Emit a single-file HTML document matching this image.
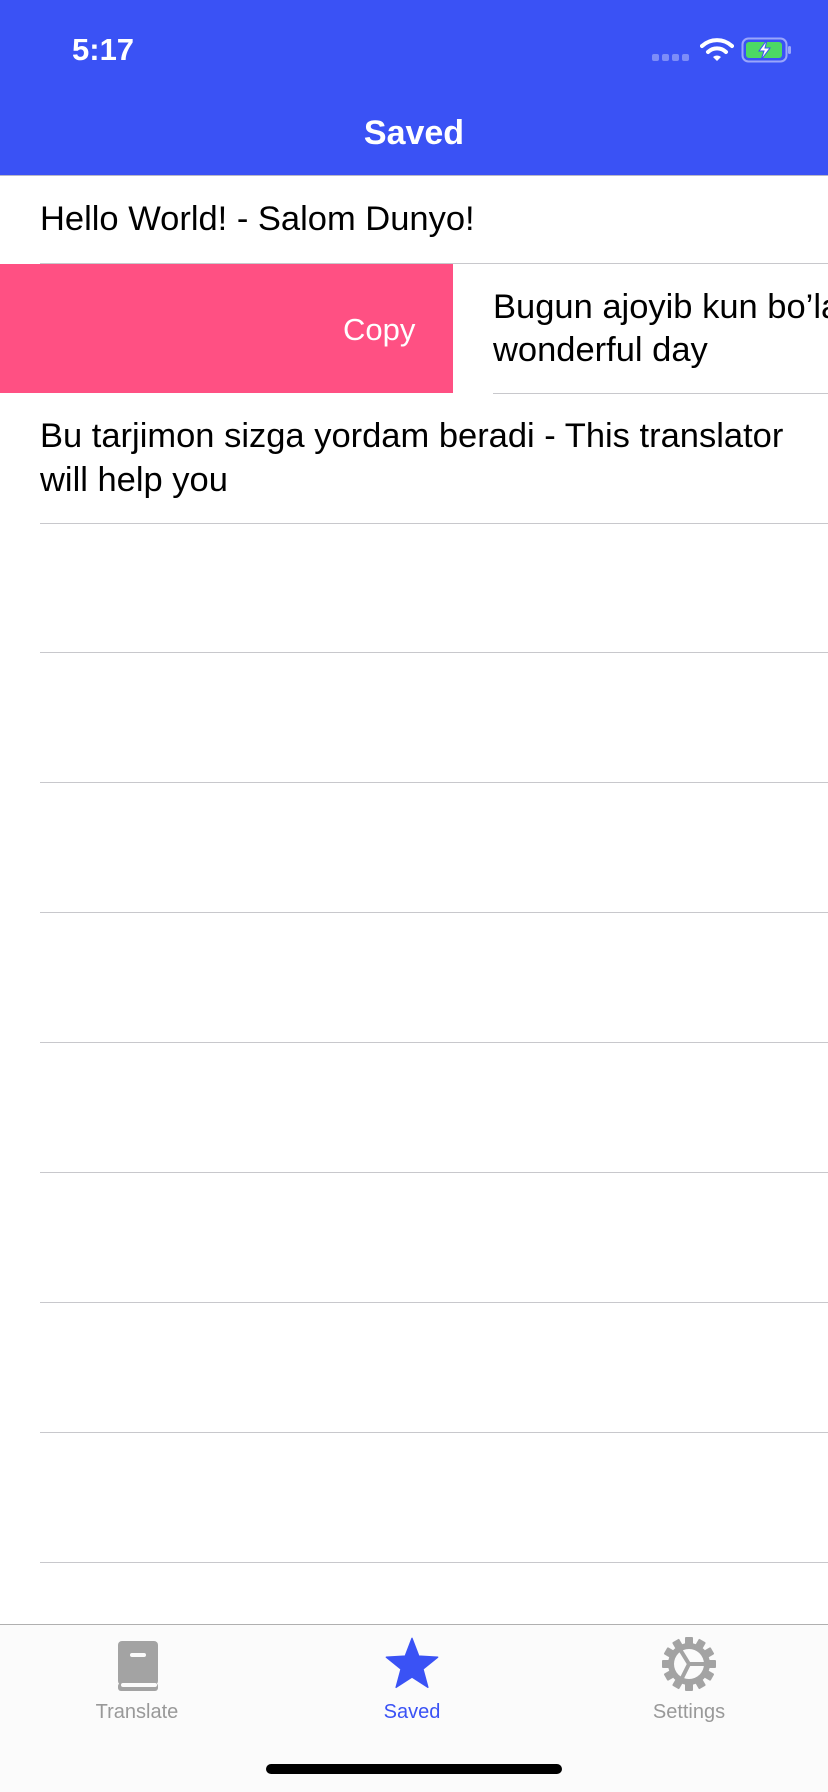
<!DOCTYPE html>
<html><head><meta charset="utf-8"><style>
*{margin:0;padding:0;box-sizing:border-box}
body{width:828px;height:1792px;position:relative;background:#fff;font-family:"Liberation Sans",sans-serif;overflow:hidden}
.nav{position:absolute;left:0;top:0;width:828px;height:176px;background:#3A52F5;border-bottom:1px solid #b8b8c8}
.time{position:absolute;left:72px;top:32px;color:#fff;font-size:31px;font-weight:bold}
.title{position:absolute;left:0;width:828px;top:114px;text-align:center;color:#fff;font-size:34px;font-weight:bold}
.t{position:absolute;font-size:34.5px;color:#000;line-height:44px;white-space:nowrap}
.sep{position:absolute;left:40px;right:0;height:1px;background:#c8c8cc}
.tab{position:absolute;top:1624px;left:0;width:828px;height:168px;background:#fbfbfb;border-top:1px solid #b0b0b0}
.lbl{position:absolute;top:1701px;font-size:20px;width:200px;text-align:center;color:#999}
</style></head><body>
<div class="nav">
<div class="time">5:17</div>
<svg style="position:absolute;left:652px;top:54px" width="40" height="8"><rect x="0" y="0" width="7" height="7" rx="2" fill="#7d8cf8"/><rect x="10" y="0" width="7" height="7" rx="2" fill="#7d8cf8"/><rect x="20" y="0" width="7" height="7" rx="2" fill="#7d8cf8"/><rect x="30" y="0" width="7" height="7" rx="2" fill="#7d8cf8"/></svg>
<svg style="position:absolute;left:700px;top:37px" width="34" height="26" viewBox="0 0 34 26"><path d="M2 9a22 22 0 0 1 30 0" stroke="#fff" stroke-width="4" fill="none" stroke-linecap="round"/><path d="M8 15a13 13 0 0 1 18 0" stroke="#fff" stroke-width="4" fill="none" stroke-linecap="round"/><path d="M13 20l4 4 4-4a6 6 0 0 0-8 0z" fill="#fff"/></svg>
<svg style="position:absolute;left:741px;top:37px" width="52" height="26" viewBox="0 0 52 26"><rect x="1.5" y="1.5" width="44" height="23" rx="6" stroke="#9aa6fa" stroke-width="2" fill="none"/><rect x="5" y="5" width="36" height="16" rx="3" fill="#4cd964"/><rect x="47" y="9" width="3" height="8" rx="1.5" fill="#9aa6fa"/><path d="M26 3l-8 11h5l-3 9 9-12h-5z" fill="#fff" stroke="#3A52F5" stroke-width="1"/></svg>
<div class="title">Saved</div>
</div>
<div class="t" style="left:40px;top:197px">Hello World! - Salom Dunyo!</div>
<div class="sep" style="top:263px"></div>
<div style="position:absolute;left:0;top:264px;width:453px;height:129px;background:#FF5083"></div>
<div class="t" style="left:343px;top:308px;color:#fff;font-size:31px">Copy</div>
<div class="t" style="left:493px;top:285px">Bugun ajoyib kun bo’la</div>
<div class="t" style="left:493px;top:328px">wonderful day</div>
<div class="sep" style="top:393px;left:493px"></div>
<div class="t" style="left:40px;top:414px">Bu tarjimon sizga yordam beradi - This translator</div>
<div class="t" style="left:40px;top:458px">will help you</div>
<div class="sep" style="top:523px"></div>
<div class="sep" style="top:652px"></div>
<div class="sep" style="top:782px"></div>
<div class="sep" style="top:912px"></div>
<div class="sep" style="top:1042px"></div>
<div class="sep" style="top:1172px"></div>
<div class="sep" style="top:1302px"></div>
<div class="sep" style="top:1432px"></div>
<div class="sep" style="top:1562px"></div>
<div class="tab"></div>
<svg style="position:absolute;left:117px;top:1641px" width="42" height="50" viewBox="0 0 42 50"><rect x="1" y="0" width="40" height="44" rx="4" fill="#a3a3a3"/><rect x="1" y="42" width="40" height="8" rx="3" fill="#a3a3a3"/><rect x="4" y="42" width="36" height="4" rx="2" fill="#fbfbfb"/><rect x="13" y="12" width="16" height="4" rx="2" fill="#fbfbfb"/></svg>
<div class="lbl" style="left:37px">Translate</div>
<svg style="position:absolute;left:384px;top:1636px" width="56" height="56" viewBox="0 0 24 24"><path d="M12 1l2.9 7.6 8.1.5-6.3 5.1 2.1 7.8L12 17.6 5.2 22l2.1-7.8L1 9.1l8.1-.5z" fill="#3A52F5" stroke="#3A52F5" stroke-linejoin="round" stroke-width="0.6"/></svg>
<div class="lbl" style="left:312px;color:#3A52F5">Saved</div>
<svg style="position:absolute;left:662px;top:1637px" width="54" height="54" viewBox="0 0 54 54"><g fill="#a3a3a3"><circle cx="27" cy="27" r="21"/><g id="g"><rect x="23" y="0" width="8" height="10" rx="1"/></g><use href="#g" transform="rotate(30 27 27)"/><use href="#g" transform="rotate(60 27 27)"/><use href="#g" transform="rotate(90 27 27)"/><use href="#g" transform="rotate(120 27 27)"/><use href="#g" transform="rotate(150 27 27)"/><use href="#g" transform="rotate(180 27 27)"/><use href="#g" transform="rotate(210 27 27)"/><use href="#g" transform="rotate(240 27 27)"/><use href="#g" transform="rotate(270 27 27)"/><use href="#g" transform="rotate(300 27 27)"/><use href="#g" transform="rotate(330 27 27)"/></g><circle cx="27" cy="27" r="15" fill="#fbfbfb"/><path d="M27 27L19 14M27 27H42M27 27L20 41" stroke="#a3a3a3" stroke-width="4"/></svg>
<div class="lbl" style="left:589px">Settings</div>
<div style="position:absolute;left:266px;top:1764px;width:296px;height:10px;border-radius:5px;background:#000"></div>
</body></html>
